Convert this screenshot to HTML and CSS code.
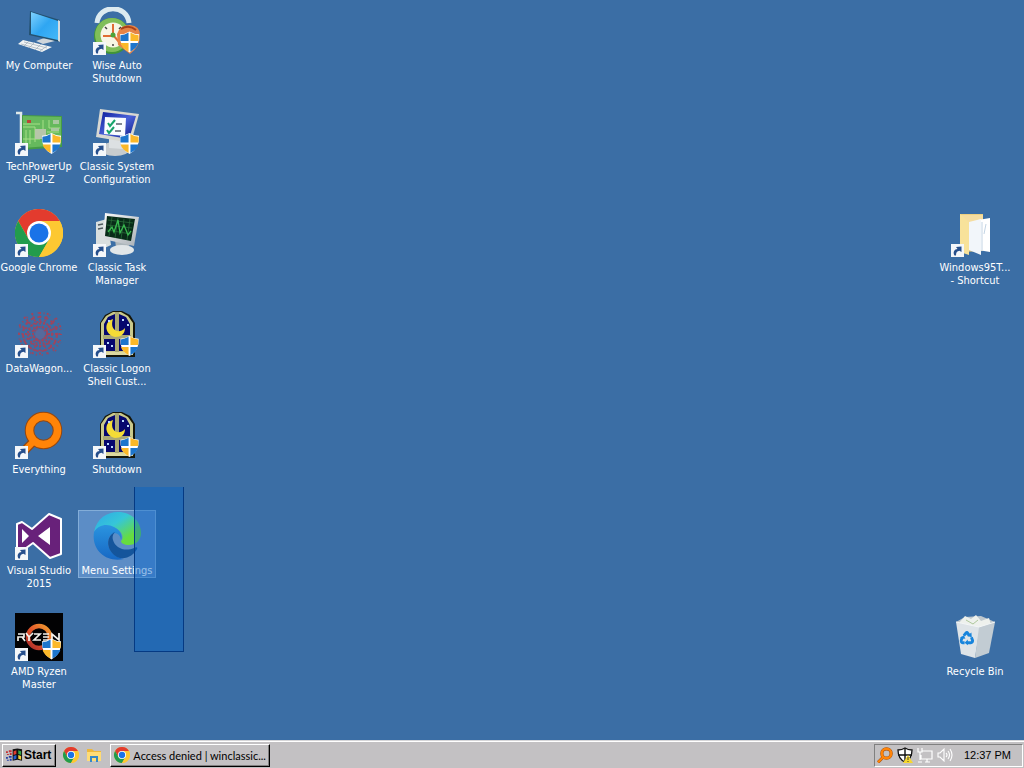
FILE: index.html
```html
<!DOCTYPE html>
<html lang="en">
<head>
<meta charset="utf-8">
<title>Desktop</title>
<link rel="stylesheet" href="styles.css">
</head>
<body>
<svg class="sprites" width="0" height="0" aria-hidden="true">
  <defs>
    <linearGradient id="screen" x1="0" y1="0" x2="1" y2="1"><stop offset="0" stop-color="#7fd2ff"/><stop offset=".5" stop-color="#2fa6f2"/><stop offset="1" stop-color="#45b8f8"/></linearGradient>
    <linearGradient id="metal" x1="0" y1="0" x2="1" y2="1"><stop offset="0" stop-color="#fafafa"/><stop offset="1" stop-color="#a9b0b6"/></linearGradient>
    <linearGradient id="navy" x1="0" y1="0" x2="1" y2="1"><stop offset="0" stop-color="#0c1c9c"/><stop offset=".5" stop-color="#4a62d8"/><stop offset="1" stop-color="#0a1684"/></linearGradient>
    <linearGradient id="ring" x1="1" y1="0" x2="0" y2="1"><stop offset="0" stop-color="#f0a030"/><stop offset=".5" stop-color="#e4572a"/><stop offset="1" stop-color="#a82a2a"/></linearGradient>
    <linearGradient id="edgeTop" x1="0" y1="0" x2="1" y2="1"><stop offset="0" stop-color="#2da8e8"/><stop offset=".4" stop-color="#36c6d8"/><stop offset=".75" stop-color="#66dc40"/></linearGradient>
    <linearGradient id="edgeLeft" x1="0" y1="0" x2="0" y2="1"><stop offset="0" stop-color="#2a94e0"/><stop offset="1" stop-color="#1768c4"/></linearGradient>
    <symbol id="arrow" viewBox="0 0 13 13">
      <rect width="13" height="13" fill="#f4f7fa"/>
      <path d="M3.500 11.500C1.500 8 3.500 5 6.500 5L5 3L10.500 2.500V8L8.500 6.800C6 7 5 8.500 5 11.500Z" fill="#264f8c"/>
    </symbol>
    <symbol id="shield" viewBox="0 0 22 24">
      <path d="M11 1Q16 4 21 4Q22 17 11 23Q0 17 1 4Q6 4 11 1Z" fill="#fff"/>
      <path d="M10 2V11H1.500V5Q6 4.500 10 2Z" fill="#1d75cc"/>
      <path d="M12 2V11H20.500V5Q16 4.500 12 2Z" fill="#fbb829"/>
      <path d="M10 13V22Q3 18 1.700 13Z" fill="#fbb829"/>
      <path d="M12 13V22Q19 18 20.300 13Z" fill="#1d75cc"/>
    </symbol>
    <symbol id="chrome" viewBox="0 0 48 48">
      <circle cx="24" cy="24" r="24" fill="#ffce3c"/>
      <path d="M3.200 12A24 24 0 0 1 44.800 12H24L13.600 30Z" fill="#e33b2e"/>
      <path d="M3.200 12A24 24 0 0 0 24 48L34.400 30L24 24L13.600 30Z" fill="#229c4c"/>
      <path d="M44.800 12A24 24 0 0 1 24 48L34.400 30L24 12Z" fill="#fdc832"/>
      <circle cx="24" cy="24" r="12" fill="#fff"/><circle cx="24" cy="24" r="9.500" fill="#1a73e8"/>
    </symbol>
    <symbol id="lens" viewBox="0 0 48 48">
      <path d="M19 30L3 46" stroke="#944710" stroke-width="9"/>
      <circle cx="28.500" cy="19.500" r="14" fill="none" stroke="#944710" stroke-width="9.500"/>
      <path d="M20 29L3 46" stroke="#ff8408" stroke-width="6.500"/>
      <circle cx="28.500" cy="19.500" r="14" fill="none" stroke="#ff8408" stroke-width="7.500"/>
    </symbol>
    <symbol id="window" viewBox="0 0 48 48">
      <path d="M7 46V13L12 5L20 1H29L37 5L42 13V47H7Z" fill="#151508"/>
      <path d="M8 44V13L13 6L20 2H28L35 6L40 13V44Z" fill="#c9c98c"/>
      <path d="M11 25V14L15 7L22 4V25ZM26 4L33 7L37 14V25H26ZM11 29H22V41H11ZM26 29H37V41H26Z" fill="#06076e"/>
      <path d="M22 2H26V43H22ZM10 25H38V29H10Z" fill="#aaa875"/>
      <path d="M20 9C10 12 12 25 22 27C28 27 32 24 32 18C26 25 16 20 20 9Z" fill="#f4dc36"/>
      <path d="M8 42H40V45H8Z" fill="#ddd9a0"/>
      <path d="M15 10h2v2h-2zM29 9h2v2h-2zM34 14h2v2h-2zM14 32h2v2h-2zM18 35h2v2h-2zM29 32h2v2h-2z" fill="#b9d8ff"/>
    </symbol>
    <symbol id="recycle" viewBox="0 0 20 20">
      <g fill="none" stroke="#1684dc" stroke-width="3.600"><path d="M6 7L9 3.500Q10 2.500 11 4L13 7"/><path d="M15.500 9L17 13Q17 15.500 14.500 16H10"/><path d="M7 16H5Q2 15.500 3 12L4.500 9"/></g>
      <path d="M10 7.500L16 9L15.500 3ZM11 12V19L7 16ZM1 10L6 6.500L8 11Z" fill="#1684dc"/>
    </symbol>
  </defs>
</svg>

<main class="desktop">
  <a class="item" href="#">
    <svg class="item-icon" viewBox="0 0 48 48"><path d="M21 34L32 30L40 34L28 37Z" fill="#ced5da"/><path d="M15 4L45 13V35L14 28Z" fill="#24516f"/><path d="M16 5L43 14V33L16 27Z" fill="url(#screen)"/><path d="M43 13L45 14V35L43 34Z" fill="#d4dce0"/><path d="M8 33L37 40L27 45L3 37Z" fill="#f1f4f4"/><path d="M9 35L32 41M6 37L28 43M14 34L9 39M20 35L14 41M26 37L20 43M32 39L25 44" stroke="#9eabb6" stroke-width=".7"/></svg>
    <span class="item-label">My Computer</span>
  </a>
  <a class="item" href="#">
    <svg class="item-icon" viewBox="0 0 48 48"><path d="M4 16C6 -3 34 -3 36 16" fill="none" stroke="#dceaf0" stroke-width="5"/><circle cx="19" cy="29" r="18" fill="#429536"/><circle cx="19" cy="28" r="17" fill="#80be59"/><circle cx="20" cy="28" r="12.500" fill="#f7f6e6"/><path d="M20 17V29H10M20 28L27 36" stroke="#e06d34" stroke-width="2" fill="none"/><circle cx="20" cy="28" r="2.500" fill="#4da43a"/><path d="M12 20l2 2M28 20l-2 2M20 37v2" stroke="#444" stroke-width="1.500"/><path d="M24 27Q27 18 37 18Q47 19 47 28Q47 40 37 47L25 38Z" fill="#e68447"/><path d="M28 22Q36 17 43 23" stroke="#a94118" stroke-width="2" fill="none"/><use href="#shield" x="26" y="23" width="21" height="24"/><use href="#arrow" y="35" width="13" height="13"/></svg>
    <span class="item-label">Wise Auto<br>Shutdown</span>
  </a>
  <a class="item" href="#">
    <svg class="item-icon" viewBox="0 0 48 48"><path d="M1 5H6V40" fill="none" stroke="#dfe9e9" stroke-width="2.500"/><path d="M7 7L47 8V39L7 42Z" fill="#459b45"/><path d="M8 8L46 9V37L8 40Z" fill="#66b95d"/><path d="M8 16H25M8 19H20V34M11 22V36M15 22V36M28 12V22M34 12V20H45M8 31H25M32 24H44" stroke="#a6df87" fill="none"/><rect x="20" y="21" width="11" height="10" fill="#b7c6aa"/><rect x="12" y="12" width="4" height="3" fill="#b84538"/><path d="M38 12h6v4h-6zM36 20h8v3h-8z" fill="#a9c8a0"/><use href="#shield" x="26" y="24" width="21" height="23"/><use href="#arrow" y="35" width="13" height="13"/></svg>
    <span class="item-label">TechPowerUp<br>GPU-Z</span>
  </a>
  <a class="item" href="#">
    <svg class="item-icon" viewBox="0 0 48 48"><ellipse cx="22" cy="41" rx="15" ry="7" fill="#c8ccce"/><path d="M16 29L29 31L30 41L16 40Z" fill="#dce0e2"/><path d="M7 1L46 6L38 35L3 29Z" fill="#d8d8d2"/><path d="M10 4L43 8L36 31L6 26Z" fill="url(#navy)"/><path d="M12 9L33 10L32 28L11 26Z" fill="#fafcff"/><path d="M15 15l2 3l5-6M14 22l2 3l5-6" fill="none" stroke="#16a36b" stroke-width="2"/><path d="M23 16H29M22 23H28" stroke="#58616e" stroke-width="1.500"/><use href="#shield" x="26" y="24" width="21" height="23"/><use href="#arrow" y="35" width="13" height="13"/></svg>
    <span class="item-label">Classic System<br>Configuration</span>
  </a>
  <a class="item" href="#">
    <svg class="item-icon" viewBox="0 0 48 48"><use href="#chrome" width="48" height="48"/><use href="#arrow" y="35" width="13" height="13"/></svg>
    <span class="item-label">Google Chrome</span>
  </a>
  <a class="item" href="#">
    <svg class="item-icon" viewBox="0 0 48 48"><path d="M3 13L14 10L18 36L3 43Z" fill="#d9dfdf"/><path d="M5 16l5-1M5 20l5-1" stroke="#505b60" stroke-width="1.500"/><path d="M22 30L37 34L35 42L23 39Z" fill="#acb6bb"/><ellipse cx="29" cy="41" rx="12" ry="5" fill="#e1e6e8"/><path d="M12 4L46 8L41 37L10 30Z" fill="url(#metal)"/><path d="M14 7L42 10L38 32L12 27Z" fill="#082b18"/><path d="M15 11L40 14M14 16L39 19M14 21L38 25M19 8L16 27M25 9L22 29M31 10L28 30M37 10L34 31" stroke="#286a39" stroke-width=".8"/><path d="M15 23L19 18L21 23L25 11L27 24L31 16L35 26L38 22" fill="none" stroke="#39bb50" stroke-width="1.300"/><use href="#arrow" y="35" width="13" height="13"/></svg>
    <span class="item-label">Classic Task<br>Manager</span>
  </a>
  <a class="item" href="#">
    <svg class="item-icon" viewBox="0 0 48 48"><g fill="none" stroke="#bd3948" stroke-width="2" stroke-dasharray="2 1.500" opacity=".75"><circle cx="25" cy="24" r="7"/><circle cx="25" cy="24" r="12"/><circle cx="25" cy="24" r="17" stroke-dasharray="4 3"/><circle cx="25" cy="24" r="21" stroke-dasharray="1 5"/><path d="M4 15L46 33M9 7L41 41M17 3L33 45M33 3L17 45M42 8L9 41M46 16L4 32M25 2V16M25 32V46M3 24H17M33 24H47"/></g><circle cx="25" cy="24" r="5" fill="#566a9c"/><use href="#arrow" y="35" width="13" height="13"/></svg>
    <span class="item-label">DataWagon...</span>
  </a>
  <a class="item" href="#">
    <svg class="item-icon" viewBox="0 0 48 48"><use href="#window" width="48" height="48"/><use href="#shield" x="26" y="25" width="21" height="22"/><use href="#arrow" y="35" width="13" height="13"/></svg>
    <span class="item-label">Classic Logon<br>Shell Cust...</span>
  </a>
  <a class="item" href="#">
    <svg class="item-icon" viewBox="0 0 48 48"><use href="#lens" width="48" height="48"/><use href="#arrow" y="35" width="13" height="13"/></svg>
    <span class="item-label">Everything</span>
  </a>
  <a class="item" href="#">
    <svg class="item-icon" viewBox="0 0 48 48"><use href="#window" width="48" height="48"/><use href="#shield" x="26" y="25" width="21" height="22"/><use href="#arrow" y="35" width="13" height="13"/></svg>
    <span class="item-label">Shutdown</span>
  </a>
  <a class="item" href="#">
    <svg class="item-icon" viewBox="0 0 48 48"><path d="M2 12L7 10L17 17L34 2L46 7V42L35 46L18 31L7 39L2 36Z" fill="#68217a" stroke="#fff" stroke-width="2" stroke-linejoin="round"/><path d="M7 17V31L14 24ZM35 15V33L23 24Z" fill="#fff"/><use href="#arrow" y="35" width="13" height="13"/></svg>
    <span class="item-label">Visual Studio<br>2015</span>
  </a>
  <a class="item item-selected" href="#" aria-current="true">
    <svg class="item-icon" viewBox="0 0 48 48"><path d="M1 20C4 6 14 0 25 0C39 0 48 10 48 21C48 29 42 33 36 33C31 33 28 31 28 29C31 27 30 19 22 16C14 12 5 14 1 20Z" fill="url(#edgeTop)"/><path d="M1 20C5 13 14 11 21 15C27 18 30 23 28 28C27 20 19 19 16 26C12 36 21 45 31 47C14 51 -2 39 1 20Z" fill="url(#edgeLeft)"/><path d="M22 20C13 24 12 38 24 45C32 49 41 43 44 37C45 35 43 35 41 36C32 40 22 36 20 28C19 25 20 22 22 20Z" fill="#14559c"/></svg>
    <span class="item-label">Menu Settings</span>
  </a>
  <a class="item" href="#">
    <svg class="item-icon" viewBox="0 0 48 48"><rect width="48" height="48" fill="#020203"/><circle cx="24" cy="24" r="11" fill="none" stroke="url(#ring)" stroke-width="4.500"/><g fill="none" stroke="#f4f2ed" stroke-width="1.700"><path d="M3 28V24H9V21H3M7 24L10 28M11 20L14 24L18 20M14 24V28M19 21H25L19 27H26M34 21H28M28 24H34M28 27H34M37 28V21L44 27V20"/></g><use href="#shield" x="26" y="24" width="21" height="24"/><use href="#arrow" y="35" width="13" height="13"/></svg>
    <span class="item-label">AMD Ryzen<br>Master</span>
  </a>
  <a class="item item-folder" href="#">
    <svg class="item-icon" viewBox="0 0 48 48"><path d="M9 5H32V42L9 43Z" fill="#eed080"/><path d="M10 6H32V39H10Z" fill="#f5dda0"/><path d="M27 11L39 9V43L27 41Z" fill="#fff"/><path d="M18 13L30 10V46L18 41Z" fill="#f2f6fa"/><path d="M9 5L18 13V46L9 43Z" fill="#f8e29a"/><path d="M31 13V42M35 15L33 25" stroke="#c3d4e4" stroke-width="1"/><use href="#arrow" y="35" width="13" height="13"/></svg>
    <span class="item-label">Windows95T...<br>- Shortcut</span>
  </a>
  <a class="item item-bin" href="#">
    <svg class="item-icon" viewBox="0 0 48 48"><path d="M5 9L14 4L30 3L44 9L35 14Z" fill="#bfc8ce"/><path d="M8 10L14 3L20 6L25 2L30 8L38 5L40 12L27 16Z" fill="#eef1ed"/><path d="M15 7L22 11L27 7" fill="none" stroke="#aec89c"/><path d="M5 9L29 14L24 45L10 41Z" fill="#dee4e8"/><path d="M28 14L44 9L38 40L24 45Z" fill="#c2ccd3"/><path d="M5 9L28 14L44 9" fill="none" stroke="#f3f6f7"/><use href="#recycle" x="8" y="17" width="16" height="16"/></svg>
    <span class="item-label">Recycle Bin</span>
  </a>
  <div class="marquee"></div>
</main>

<footer class="taskbar">
  <button class="raised start" type="button">
    <svg class="flag" viewBox="0 0 18 16"><path d="M7 2L12 1L17 2V14L12 13L7 14Z" fill="#111"/><path d="M8 4L11 3V7L8 8Z" fill="#e03c31"/><path d="M13 3L16 4V8L13 7Z" fill="#35a847"/><path d="M8 9L11 8V12L8 13Z" fill="#245fd0"/><path d="M13 8L16 9V13L13 12Z" fill="#f1cf36"/><path d="M0 4h2v2H0zM3 3h3v2H3zM1 7h2v1H1zM4 6h2v2H4z" fill="#c33335"/><path d="M0 10h2v2H0zM3 9h3v2H3zM1 13h2v1H1zM4 12h2v2H4z" fill="#263fa5"/></svg>
    Start
  </button>
  <nav class="quick" aria-label="Quick launch">
    <button class="plain" type="button" aria-label="Google Chrome"><svg class="small-icon" viewBox="0 0 48 48"><use href="#chrome" width="48" height="48"/></svg></button>
    <button class="plain" type="button" aria-label="File Explorer"><svg class="small-icon" viewBox="0 0 16 16"><path d="M1 2H6L8 4H15V14H1Z" fill="#eeb83c"/><path d="M1 5H15V14H1Z" fill="#ffdc76"/><path d="M4 15V9H12V15H10V11H6V15Z" fill="#3688c7"/></svg></button>
  </nav>
  <button class="raised task" type="button">
    <svg class="small-icon" viewBox="0 0 48 48"><use href="#chrome" width="48" height="48"/></svg>
    <span class="task-title">Access denied | winclassic...</span>
  </button>
  <div class="tray">
    <button class="plain" type="button" aria-label="Everything"><svg class="small-icon" viewBox="0 0 48 48"><use href="#lens" width="48" height="48"/></svg></button>
    <button class="plain" type="button" aria-label="Security"><svg class="small-icon" viewBox="0 0 16 16"><path d="M8 1Q11 3 15 3Q15 12 8 15Q1 12 1 3Q5 3 8 1Z" fill="#fff" stroke="#111" stroke-width="1.300"/><path d="M8 1V15M1 8H15" stroke="#111" stroke-width="1.400"/><path d="M11 8L16 16H6Z" fill="#f7d82d"/><path d="M11 10V13M11 14V15" stroke="#443" stroke-width="1"/></svg></button>
    <button class="plain" type="button" aria-label="Network"><svg class="small-icon" viewBox="0 0 16 16"><path d="M5 4H15V12H4V8M8 15H13M10 12V15M1 1V5H5V1M3 5V13M1 15H5" fill="none" stroke="#fff" stroke-width="1.200"/></svg></button>
    <button class="plain" type="button" aria-label="Volume"><svg class="small-icon" viewBox="0 0 16 16"><path d="M1 6H3L7 2V14L3 10H1ZM9 6Q11 8 9 10M11 4Q14 8 11 12M13 2Q17 8 13 14" fill="none" stroke="#fff" stroke-width="1.100"/></svg></button>
    <time class="clock">12:37 PM</time>
  </div>
</footer>
</body>
</html>
```

FILE: styles.css
```css
* { box-sizing: border-box; }

body {
  margin: 0;
  min-height: 100vh;
  display: flex;
  flex-direction: column;
  background: #3b6ea5;
  font-family: "DejaVu Sans Condensed", "Noto Sans", sans-serif;
  font-size: 11px;
  line-height: 13px;
  overflow: hidden;
}

.sprites { position: absolute; }

.desktop {
  position: relative;
  flex: 1;
  display: grid;
  grid-template-columns: 78px 78px 1fr 78px;
  grid-auto-rows: 101px;
  align-items: start;
  padding: 5px 10px 0 0;
}

.item {
  display: flex;
  flex-direction: column;
  align-items: center;
  gap: 4px;
  padding: 2px 0 1px;
  color: #fff;
  text-align: center;
  text-decoration: none;
  white-space: nowrap;
}
.item:nth-of-type(odd) { grid-column: 1; }
.item:nth-of-type(even) { grid-column: 2; }
.item.item-folder { grid-column: 4; grid-row: 3; }
.item.item-bin { grid-column: 4; grid-row: 7; }

.item-icon { width: 48px; height: 48px; }

.item-selected {
  background: #5c8dc6;
  box-shadow: inset 0 0 0 1px #83add8;
}

.marquee {
  position: absolute;
  left: 134px;
  top: 487px;
  width: 50px;
  height: 165px;
  background: rgba(1, 97, 200, 0.4);
  border: 1px solid #053a83;
  border-top: 0;
}

.taskbar {
  display: flex;
  align-items: center;
  height: 28px;
  padding: 2px 1px 0 2px;
  background: #c3c1c3;
  box-shadow: inset 0 1px #d6d6d8, inset 0 2px #fff;
  font-family: "Liberation Sans", Arial, sans-serif;
}

button {
  font: inherit;
  color: #000;
  cursor: pointer;
}

.raised {
  display: flex;
  align-items: center;
  height: 23px;
  background: #c3c1c3;
  border: 1px solid;
  border-color: #fff #000 #000 #fff;
  box-shadow: inset -1px -1px #808080;
}

.start {
  gap: 1px;
  padding: 0 4px 0 3px;
  font-size: 12px;
  font-weight: bold;
}
.flag { width: 17px; height: 16px; }

.quick {
  display: flex;
  gap: 7px;
  padding: 0 8px 0 7px;
}

.plain {
  display: flex;
  padding: 0;
  background: none;
  border: 0;
}

.small-icon { width: 16px; height: 16px; flex: none; }

.task {
  gap: 3px;
  width: 160px;
  padding: 0 3px;
  font-family: Lato, "Liberation Sans", sans-serif;
}
.task-title { white-space: nowrap; }

.tray {
  display: flex;
  align-items: center;
  gap: 4px;
  height: 23px;
  margin-left: auto;
  padding: 0 11px 0 2px;
  border: 1px solid;
  border-color: #808080 #fff #fff #808080;
}
.clock { padding-left: 7px; }
```
